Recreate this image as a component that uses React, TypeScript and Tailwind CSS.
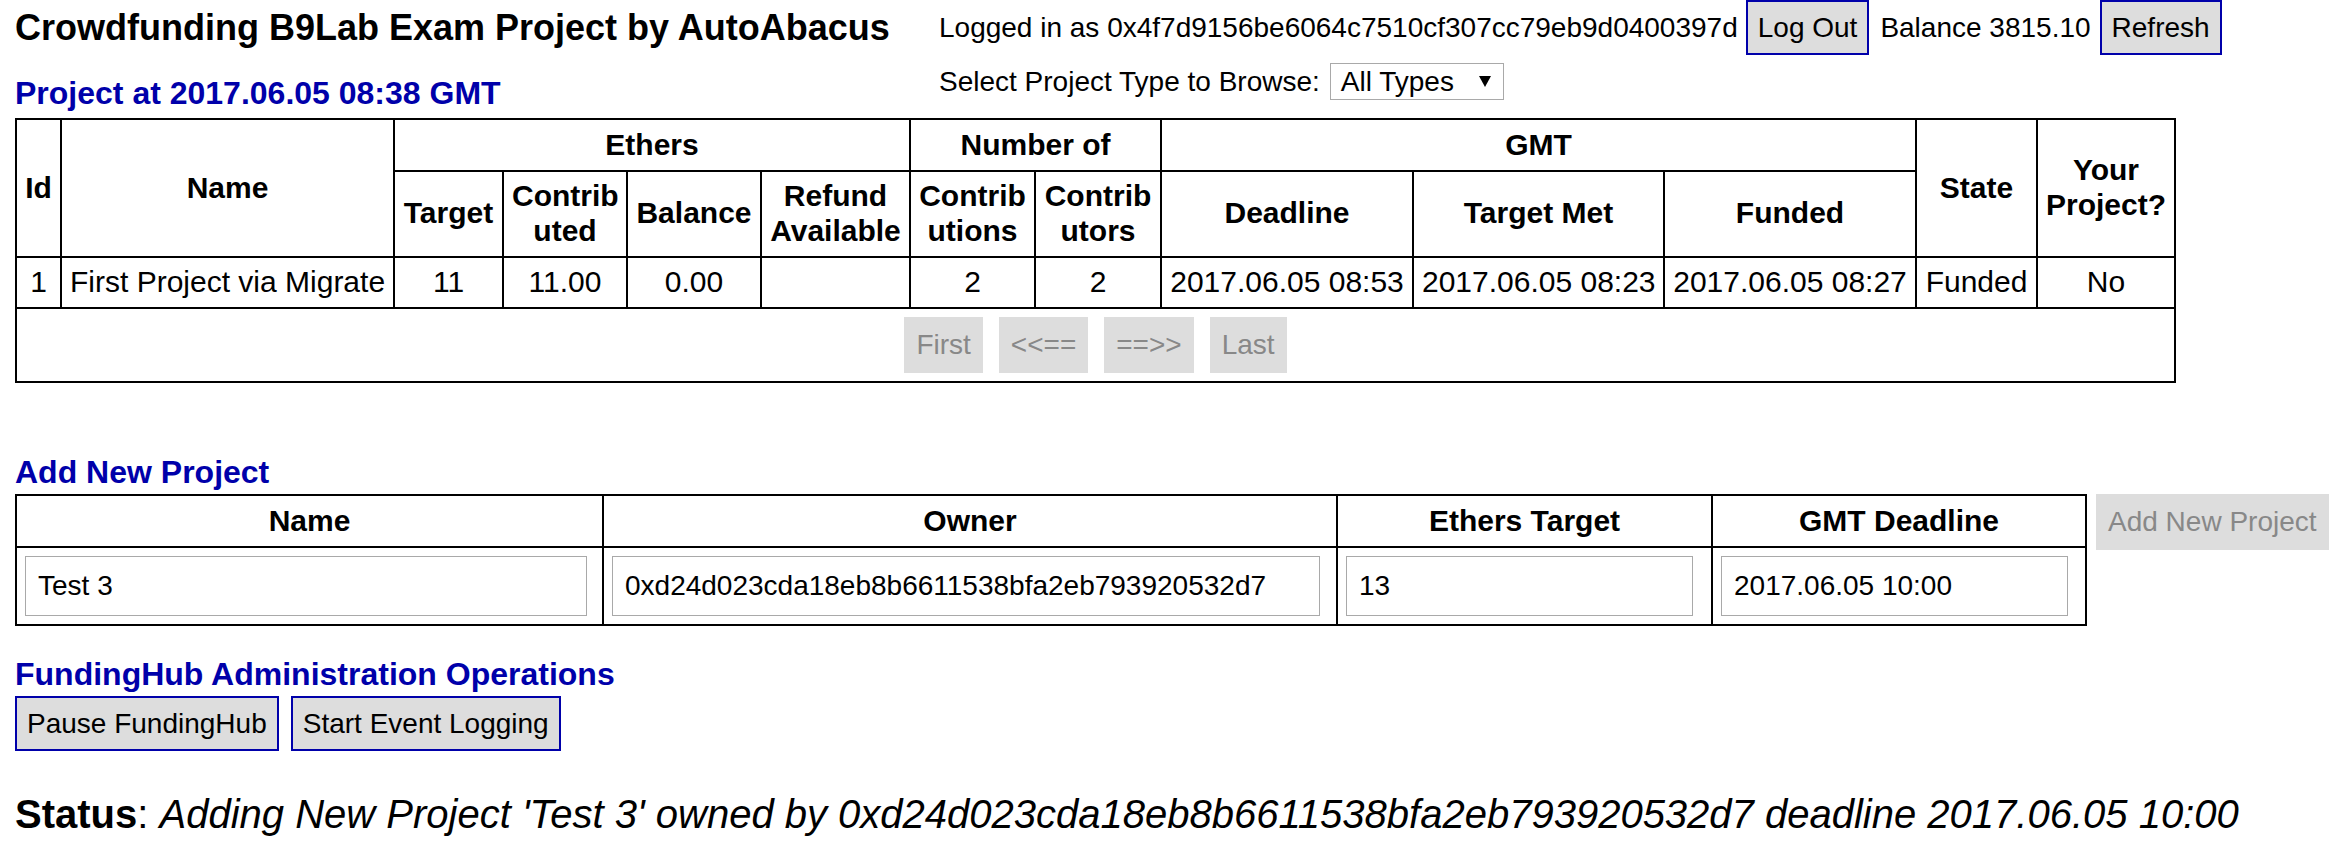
import React from "react";

const th =
  "border-2 border-black px-[8px] py-[7.5px] text-center align-middle font-bold whitespace-nowrap";
const td =
  "border-2 border-black px-[8px] py-[7.5px] text-center align-middle font-normal whitespace-nowrap";
const blueBtn =
  "h-[55px] border-2 border-[#0000aa] bg-[#dddddd] px-[10px] text-[28px] leading-[32px] text-black whitespace-nowrap";
const grayBtn =
  "h-[56px] border-2 border-[#dddddd] bg-[#dddddd] px-[10px] text-[28px] leading-[32px] text-[#888888] whitespace-nowrap";
const inputCls =
  "block h-[60px] border border-[#a9a9a9] bg-white px-[12px] text-[28px] leading-[32px] text-black outline-none";

export default function App() {
  return (
    <div className="min-h-[851px] w-[2346px] bg-white px-[15px] text-black font-['Liberation_Sans',Arial,sans-serif]">
      {/* Header */}
      <div className="flex h-[118px] items-start">
        <div className="w-[924px] shrink-0">
          <div className="pt-[7px] text-[36px] font-bold leading-[41px] whitespace-nowrap">
            Crowdfunding B9Lab Exam Project by AutoAbacus
          </div>
          <div className="mt-[26.5px] text-[32px] font-bold leading-[37px] text-[#0000aa] whitespace-nowrap">
            Project at 2017.06.05 08:38 GMT
          </div>
        </div>
        <div className="flex flex-col text-[28px] leading-[32px]">
          <div className="flex h-[55px] items-center whitespace-nowrap">
            <span>Logged in as 0x4f7d9156be6064c7510cf307cc79eb9d0400397d</span>
            <button className={"ml-[8px] " + blueBtn}>Log Out</button>
            <span className="ml-[11px]">Balance 3815.10</span>
            <button className={"ml-[9px] " + blueBtn}>Refresh</button>
          </div>
          <div className="mt-[8px] flex h-[37px] items-center whitespace-nowrap">
            <span>Select Project Type to Browse:</span>
            <div className="ml-[10px] flex h-[37px] w-[174px] items-center justify-between border border-[#a9a9a9] bg-white pl-[10px] pr-[12px]">
              <span>All Types</span>
              <svg width="12" height="11" viewBox="0 0 12 11">
                <polygon points="0,0 12,0 6,11" fill="#000" />
              </svg>
            </div>
          </div>
        </div>
      </div>

      {/* Projects table */}
      <table className="w-[2160px] table-fixed border-collapse text-[30px] leading-[34.5px]">
        <colgroup>
          <col className="w-[45px]" />
          <col className="w-[333px]" />
          <col className="w-[109px]" />
          <col className="w-[124px]" />
          <col className="w-[134px]" />
          <col className="w-[149px]" />
          <col className="w-[125px]" />
          <col className="w-[126px]" />
          <col className="w-[252px]" />
          <col className="w-[251px]" />
          <col className="w-[252px]" />
          <col className="w-[121px]" />
          <col className="w-[138px]" />
        </colgroup>
        <thead>
          <tr>
            <th rowSpan={2} className={th}>Id</th>
            <th rowSpan={2} className={th}>Name</th>
            <th colSpan={4} className={th}>Ethers</th>
            <th colSpan={2} className={th}>Number of</th>
            <th colSpan={3} className={th}>GMT</th>
            <th rowSpan={2} className={th}>State</th>
            <th rowSpan={2} className={th}>
              Your
              <br />
              Project?
            </th>
          </tr>
          <tr>
            <th className={th}>Target</th>
            <th className={th}>
              Contrib
              <br />
              uted
            </th>
            <th className={th}>Balance</th>
            <th className={th}>
              Refund
              <br />
              Available
            </th>
            <th className={th}>
              Contrib
              <br />
              utions
            </th>
            <th className={th}>
              Contrib
              <br />
              utors
            </th>
            <th className={th}>Deadline</th>
            <th className={th}>Target Met</th>
            <th className={th}>Funded</th>
          </tr>
        </thead>
        <tbody>
          <tr>
            <td className={td}>1</td>
            <td className="border-2 border-black px-[8px] py-[7.5px] text-left align-middle whitespace-nowrap">
              First Project via Migrate
            </td>
            <td className={td}>11</td>
            <td className={td}>11.00</td>
            <td className={td}>0.00</td>
            <td className={td}></td>
            <td className={td}>2</td>
            <td className={td}>2</td>
            <td className={td}>2017.06.05 08:53</td>
            <td className={td}>2017.06.05 08:23</td>
            <td className={td}>2017.06.05 08:27</td>
            <td className={td}>Funded</td>
            <td className={td}>No</td>
          </tr>
          <tr>
            <td colSpan={13} className="border-2 border-black py-[8px]">
              <div className="flex justify-center gap-[16px]">
                <button className={grayBtn}>First</button>
                <button className={grayBtn}>&lt;&lt;==</button>
                <button className={grayBtn}>==&gt;&gt;</button>
                <button className={grayBtn}>Last</button>
              </div>
            </td>
          </tr>
        </tbody>
      </table>

      {/* Add New Project */}
      <div className="mt-[71px] text-[32px] font-bold leading-[37px] text-[#0000aa] whitespace-nowrap">
        Add New Project
      </div>
      <div className="mt-[3px] flex items-start">
        <table className="w-[2072px] table-fixed border-collapse text-[30px] leading-[34.5px]">
          <colgroup>
            <col className="w-[587px]" />
            <col className="w-[734px]" />
            <col className="w-[375px]" />
            <col className="w-[374px]" />
          </colgroup>
          <thead>
            <tr>
              <th className={th}>Name</th>
              <th className={th}>Owner</th>
              <th className={th}>Ethers Target</th>
              <th className={th}>GMT Deadline</th>
            </tr>
          </thead>
          <tbody>
            <tr>
              <td className="border-2 border-black px-[8px] py-[8px]">
                <input readOnly value="Test 3" className={"w-[562px] " + inputCls} />
              </td>
              <td className="border-2 border-black px-[8px] py-[8px]">
                <input
                  readOnly
                  value="0xd24d023cda18eb8b6611538bfa2eb793920532d7"
                  className={"w-[708px] " + inputCls}
                />
              </td>
              <td className="border-2 border-black px-[8px] py-[8px]">
                <input readOnly value="13" className={"w-[347px] " + inputCls} />
              </td>
              <td className="border-2 border-black px-[8px] py-[8px]">
                <input readOnly value="2017.06.05 10:00" className={"w-[347px] " + inputCls} />
              </td>
            </tr>
          </tbody>
        </table>
        <button className={"ml-[9px] " + grayBtn}>Add New Project</button>
      </div>

      {/* Admin */}
      <div className="mt-[30px] text-[32px] font-bold leading-[37px] text-[#0000aa] whitespace-nowrap">
        FundingHub Administration Operations
      </div>
      <div className="mt-[3.5px] flex gap-[12px]">
        <button className={blueBtn}>Pause FundingHub</button>
        <button className={blueBtn}>Start Event Logging</button>
      </div>

      {/* Status */}
      <div className="mt-[40px] text-[40px] leading-[46px] whitespace-nowrap">
        <b className="font-bold">Status</b>:{" "}
        <i className="italic">
          Adding New Project 'Test 3' owned by 0xd24d023cda18eb8b6611538bfa2eb793920532d7 deadline 2017.06.05 10:00
        </i>
      </div>
    </div>
  );
}
